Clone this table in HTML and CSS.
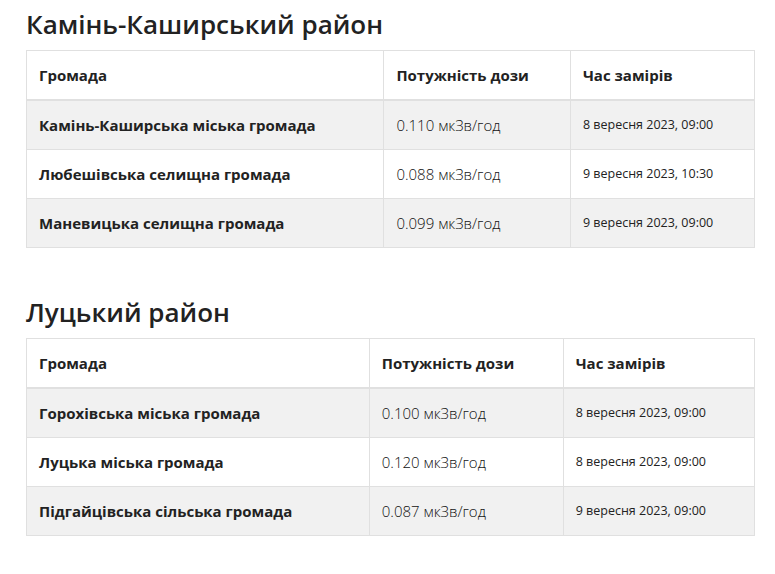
FILE: index.html
```html
<!DOCTYPE html>
<html lang="uk">
<head>
<meta charset="utf-8">
<link rel="stylesheet" href="styles.css">
</head>
<body>
<main class="page">
  <section class="district">
    <h2 class="district-title">Камінь-Каширський район</h2>
    <table class="dose-table">
      <thead>
        <tr><th class="c-name">Громада</th><th class="c-dose">Потужність дози</th><th class="c-time">Час замірів</th></tr>
      </thead>
      <tbody>
        <tr><td class="name">Камінь-Каширська міська громада</td><td class="dose">0.110 мкЗв/год</td><td class="time">8 вересня 2023, 09:00</td></tr>
        <tr><td class="name">Любешівська селищна громада</td><td class="dose">0.088 мкЗв/год</td><td class="time">9 вересня 2023, 10:30</td></tr>
        <tr><td class="name">Маневицька селищна громада</td><td class="dose">0.099 мкЗв/год</td><td class="time">9 вересня 2023, 09:00</td></tr>
      </tbody>
    </table>
  </section>
  <section class="district">
    <h2 class="district-title">Луцький район</h2>
    <table class="dose-table">
      <thead>
        <tr><th class="c-name">Громада</th><th class="c-dose">Потужність дози</th><th class="c-time">Час замірів</th></tr>
      </thead>
      <tbody>
        <tr><td class="name">Горохівська міська громада</td><td class="dose">0.100 мкЗв/год</td><td class="time">8 вересня 2023, 09:00</td></tr>
        <tr><td class="name">Луцька міська громада</td><td class="dose">0.120 мкЗв/год</td><td class="time">8 вересня 2023, 09:00</td></tr>
        <tr><td class="name">Підгайцівська сільська громада</td><td class="dose">0.087 мкЗв/год</td><td class="time">9 вересня 2023, 09:00</td></tr>
      </tbody>
    </table>
  </section>
</main>
</body>
</html>
```
FILE: styles.css
```css
html, body {
  margin: 0;
  padding: 0;
  background: #fff;
}
body {
  font-family: "Open Sans", "Noto Sans", sans-serif;
  color: #222;
}
.page {
  width: 729px;
  margin-left: 26px;
  padding-top: 6px;
}
.district {
  margin-bottom: 46px;
}
.district-title {
  margin: 0 0 8px;
  font-size: 26px;
  font-weight: 600;
  line-height: 36px;
  color: #222;
}
.dose-table {
  width: 100%;
  border-collapse: collapse;
  border: 1px solid #e0e0e0;
  font-size: 15px;
  line-height: 20px;
}
.dose-table th,
.dose-table td {
  border: 1px solid #e0e0e0;
  padding: 14px 12px;
  text-align: left;
  vertical-align: middle;
}
.dose-table th {
  font-weight: 700;
  color: #222;
  border-bottom-width: 2px;
}
.dose-table tbody tr:nth-child(odd) {
  background: #f1f1f1;
}
.name {
  font-weight: 700;
  color: #222;
}
.dose {
  font-weight: 300;
  color: #111;
}
.time {
  font-size: 12.5px;
  color: #222;
}
```
